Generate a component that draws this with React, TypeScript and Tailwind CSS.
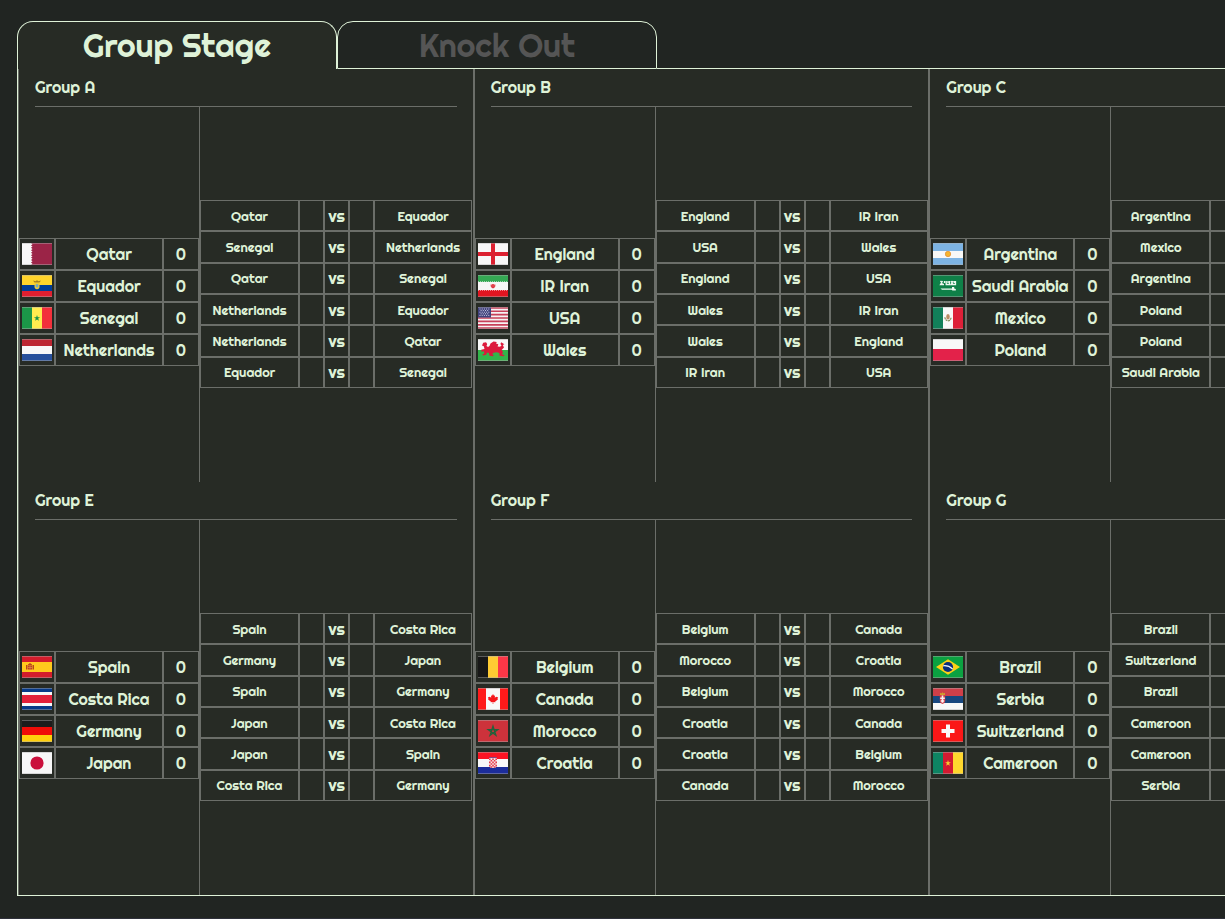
import React, { useState } from "react";

const STAR = "0,-1 0.2245,-0.309 0.951,-0.309 0.3633,0.118 0.5878,0.809 0,0.382 -0.5878,0.809 -0.3633,0.118 -0.951,-0.309 -0.2245,-0.309";

function Star({ x, y, r, ...rest }: { x: number; y: number; r: number } & React.SVGProps<SVGPolygonElement>) {
  return <polygon points={STAR} transform={`translate(${x} ${y}) scale(${r})`} {...rest} />;
}

function Rows({ colors, stops }: { colors: string[]; stops: number[] }) {
  return (
    <>
      {colors.map((c, i) => (
        <rect key={i} x="0" width="30" y={stops[i]} height={stops[i + 1] - stops[i]} fill={c} />
      ))}
    </>
  );
}

function Cols({ colors, stops }: { colors: string[]; stops: number[] }) {
  return (
    <>
      {colors.map((c, i) => (
        <rect key={i} y="0" height="22" x={stops[i]} width={stops[i + 1] - stops[i]} fill={c} />
      ))}
    </>
  );
}

const FLAGS: Record<string, React.ReactNode> = {
  Qatar: (
    <>
      <rect width="30" height="22" fill="#9b2447" />
      <path d="M0 0H9L10.5 1.2 9 2.4 10.5 3.6 9 4.8 10.5 6 9 7.3 10.5 8.5 9 9.8 10.5 11 9 12.2 10.5 13.4 9 14.6 10.5 15.8 9 17 10.5 18.3 9 19.6 10.5 20.8 9 22H0Z" fill="#f8f8f8" />
    </>
  ),
  Equador: (
    <>
      <Rows colors={["#ffd42b", "#003d96", "#e01f30"]} stops={[0, 10, 16, 22]} />
      <path d="M11 5.5L13.5 6.2 15 5.3 16.5 6.2 19 5.5 17.5 7.4H12.5Z" fill="#a58122" />
      <path d="M12.5 8.2H17.5V11.5A2.5 2.8 0 0 1 12.5 11.5Z" fill="#e8c93a" />
      <ellipse cx="15" cy="10.8" rx="1.4" ry="1.7" fill="#6ea8c8" />
    </>
  ),
  Senegal: (
    <>
      <Cols colors={["#1b9648", "#ffec4f", "#f3303b"]} stops={[0, 10, 20, 30]} />
      <Star x={15} y={11.2} r={3.3} fill="#15924a" />
    </>
  ),
  Netherlands: <Rows colors={["#bd2733", "#f8f8f8", "#27509c"]} stops={[0, 7, 15, 22]} />,
  England: (
    <>
      <rect width="30" height="22" fill="#f7f7f7" />
      <path d="M13 0H17V9H30V13H17V22H13V13H0V9H13Z" fill="#dc2030" />
    </>
  ),
  "IR Iran": (
    <>
      <Rows colors={["#34a853", "#f6f6f6", "#e01520"]} stops={[0, 7, 15, 22]} />
      <path d="M0 6.6H30M0 15.4H30" stroke="#f6f6f6" strokeWidth="0.6" strokeDasharray="1 1" />
      <ellipse cx="15" cy="11.1" rx="2" ry="2" fill="#e5525a" />
      <path d="M13 9.6Q12.5 12.2 15 13 17.5 12.2 17 9.6M15 9V13.2" fill="none" stroke="#dc2a36" strokeWidth="0.8" />
    </>
  ),
  USA: (
    <>
      <rect width="30" height="22" fill="#f7f2f3" />
      <path d="M0 .85H30M0 4.25H30M0 7.6H30M0 11H30M0 14.4H30M0 17.8H30M0 21.2H30" stroke="#c8405a" strokeWidth="1.7" />
      <rect width="13" height="10.5" fill="#40417c" />
      <path d="M1.5 2H12M1.5 5.2H12M1.5 8.4H12" stroke="#e0e0f0" strokeWidth="0.9" strokeDasharray="1 1.2" />
      <path d="M2.6 3.6H11M2.6 6.8H11" stroke="#e0e0f0" strokeWidth="0.9" strokeDasharray="1 1.2" />
    </>
  ),
  Wales: (
    <>
      <Rows colors={["#f8f8f8", "#33b54a"]} stops={[0, 11, 22]} />
      <path d="M4 6.5L5.2 3.8 8 3.2 9.2 5 8.5 7 10 8 11.5 7 12.5 4.6 15.5 2.6 18.8 3 18 4.6 20.3 5.2 19.6 7.4 22 7.8 23.6 6.4 22.4 5 23.2 3.2 26.4 5.2 24.8 6 26 8.5 23.6 11 25 13 24 15.2 26.5 16.3 25.5 17.2 21.6 16.8 21.4 14 18.6 13.2 15.5 13.8 14.2 15 15.6 16.2 15 17.2 11.5 16.8 11 14 9 13.6 8.2 15.8 5 16.5 4.4 15.5 6.3 14.4 6 12.2 3.6 12.8 3.2 10.8 6.5 10 5.8 7.2Z" fill="#dc1a3c" />
    </>
  ),
  Argentina: (
    <>
      <Rows colors={["#7db4e4", "#f8f8f8", "#7db4e4"]} stops={[0, 8, 15, 22]} />
      <circle cx="15" cy="11" r="2.7" fill="#f6b52e" stroke="#e08c35" strokeWidth="0.7" />
    </>
  ),
  "Saudi Arabia": (
    <>
      <rect width="30" height="22" fill="#0f8048" />
      <path d="M7.5 6L9.5 8.5M9.5 6L7.5 9.5H11M11.5 6V8M13.2 6V9.5H16.5V6M15 6V8M18 6L20 9.5M20 6L18 9.5H22.5V6M21.2 6V8" fill="none" stroke="#eef8f0" strokeWidth="1.3" />
      <path d="M7.5 13.4L19 13.4V12H21.2V13.6L22.8 14V15.6H19.5L18.5 14.8H9Z" fill="#f2faf4" />
    </>
  ),
  Mexico: (
    <>
      <Cols colors={["#12805a", "#f8f8f8", "#dd2038"]} stops={[0, 10, 20, 30]} />
      <ellipse cx="15" cy="9.8" rx="1.8" ry="2.8" fill="#b98b63" />
      <path d="M11.9 10.2Q12.2 13.5 15 13.8 17.8 13.5 18.1 10.2" fill="none" stroke="#7c8a58" strokeWidth="1.2" strokeDasharray="2 0.6" />
    </>
  ),
  Poland: <Rows colors={["#f8f8f8", "#e3224a"]} stops={[0, 10, 22]} />,
  Spain: (
    <>
      <Rows colors={["#d31c2c", "#ffc91d", "#d31c2c"]} stops={[0, 6, 16, 22]} />
      <path d="M4 9H5.5V13.5H4ZM10.5 9H12V13.5H10.5ZM6 8.5L8 7 10 8.5V9.5H6Z" fill="#b8451c" />
      <path d="M6 9.8H10V13.5H6Z" fill="#c03a28" />
      <path d="M8 10V13.5M6 11.5H10" stroke="#e3a04a" strokeWidth="0.6" />
    </>
  ),
  "Costa Rica": <Rows colors={["#073a88", "#f8f8f8", "#e3203a", "#f8f8f8", "#073a88"]} stops={[0, 4, 7, 15, 18, 22]} />,
  Germany: <Rows colors={["#1c1c1c", "#f00c08", "#ffd00c"]} stops={[0, 7, 15, 22]} />,
  Japan: (
    <>
      <rect width="30" height="22" fill="#f7f7f7" />
      <circle cx="15" cy="11" r="6.6" fill="#ca0f3b" />
    </>
  ),
  Belgium: <Cols colors={["#181818", "#ffcb33", "#fb3747"]} stops={[0, 10, 20, 30]} />,
  Canada: (
    <>
      <Cols colors={["#ff1a1a", "#f8f8f8", "#ff1a1a"]} stops={[0, 8, 22, 30]} />
      <path d="M15 6L16 7.8 17 7.4 16.8 9.8 18.2 8.8 20.2 9.5 19.4 11 20 11.6 17.2 13.6 17.4 14.3 15.3 14V16H14.7V14L12.6 14.3 12.8 13.6 10 11.6 10.6 11 9.8 9.5 11.8 8.8 13.2 9.8 13 7.4 14 7.8Z" fill="#f5161b" />
    </>
  ),
  Morocco: (
    <>
      <rect width="30" height="22" fill="#cd323b" />
      <g transform="translate(15 11.2)">
        <path d="M0-5L2.94 4.05-4.76-1.55H4.76L-2.94 4.05Z" fill="none" stroke="#23603a" strokeWidth="1.3" />
      </g>
    </>
  ),
  Croatia: (
    <>
      <Rows colors={["#fb1423", "#f8f8f8", "#1c2d9b"]} stops={[0, 7, 15, 22]} />
      <path d="M11 6H19V13.5Q18.5 16 15 16 11.5 16 11 13.5Z" fill="#f8e4e6" />
      <path d="M11 7.2H19M11 10.4H19M11 13.6H19" stroke="#e63a4a" strokeWidth="1.6" strokeDasharray="1.6 1.6" />
      <path d="M12.6 8.8H19M12.6 12H19M12.6 15H17.6" stroke="#e63a4a" strokeWidth="1.6" strokeDasharray="1.6 1.6" />
      <path d="M11.5 5.6H18.5" stroke="#4a62b8" strokeWidth="1" strokeDasharray="1.4 0.5" />
    </>
  ),
  Brazil: (
    <>
      <rect width="30" height="22" fill="#0ba141" />
      <path d="M15 3.2L27 11 15 18.8 3 11Z" fill="#fdd116" />
      <circle cx="15" cy="11" r="5.1" fill="#0b2f7c" />
      <path d="M10.2 9.8Q15.5 9.2 19.6 13" fill="none" stroke="#f2f6fa" strokeWidth="1.2" />
    </>
  ),
  Serbia: (
    <>
      <Rows colors={["#cf3f49", "#18477f", "#f8f8f8"]} stops={[0, 8, 15, 22]} />
      <path d="M7 7V4.8L8.3 5.6 9.5 4.2 10.7 5.6 12 4.8V7Z" fill="#d0a02c" />
      <path d="M6.8 7.5H12.2V13Q12 15.5 9.5 16 7 15.5 6.8 13Z" fill="#d8404a" />
      <path d="M9.5 7.6V14.8M7.2 10.2H11.8M7.8 13H11.2" stroke="#f8f0f0" strokeWidth="1.6" />
    </>
  ),
  Switzerland: (
    <>
      <rect width="30" height="22" fill="#fb1717" />
      <path d="M13 4.5H17V9H21.5V13H17V17.5H13V13H8.5V9H13Z" fill="#fafafa" />
    </>
  ),
  Cameroon: (
    <>
      <Cols colors={["#0e8463", "#d41a31", "#ffd72e"]} stops={[0, 10, 20, 30]} />
      <Star x={15} y={11.2} r={3.1} fill="#f8cf2c" />
    </>
  ),
};

function Flag({ team }: { team: string }) {
  return (
    <svg viewBox="0 0 30 22" className="mx-auto block h-[22px] w-[30px]" role="img" aria-label={team}>
      {FLAGS[team]}
      <path d="M0 .5H30M0 21.5H30" stroke="#b0b0b0" strokeOpacity="0.45" />
    </svg>
  );
}

const GROUPS = [
  { name: "Group A", teams: ["Qatar", "Equador", "Senegal", "Netherlands"] },
  { name: "Group B", teams: ["England", "IR Iran", "USA", "Wales"] },
  { name: "Group C", teams: ["Argentina", "Saudi Arabia", "Mexico", "Poland"] },
  { name: "Group E", teams: ["Spain", "Costa Rica", "Germany", "Japan"] },
  { name: "Group F", teams: ["Belgium", "Canada", "Morocco", "Croatia"] },
  { name: "Group G", teams: ["Brazil", "Serbia", "Switzerland", "Cameroon"] },
];

// Index pairs into a group's team list, in playing order.
const FIXTURES = [
  [0, 1],
  [2, 3],
  [0, 2],
  [3, 1],
  [3, 0],
  [1, 2],
];

const CELL = "border border-[#6b6e69] p-0 text-center align-middle";

function Standings({ teams }: { teams: string[] }) {
  return (
    <table className="w-full table-fixed border-separate border-spacing-0 text-base leading-5">
      <colgroup>
        <col className="w-9" />
        <col />
        <col className="w-9" />
      </colgroup>
      <tbody>
        {teams.map((team) => (
          <tr key={team} className="h-8">
            <td className={CELL}>
              <Flag team={team} />
            </td>
            <td className={`${CELL} whitespace-nowrap`}>{team}</td>
            <td className={CELL}>0</td>
          </tr>
        ))}
      </tbody>
    </table>
  );
}

function Matches({ teams }: { teams: string[] }) {
  return (
    <table className="h-[188px] w-[272px] table-fixed border-separate border-spacing-0 text-[13px] leading-5">
      <colgroup>
        <col className="w-[99px]" />
        <col className="w-[25px]" />
        <col className="w-[25px]" />
        <col className="w-[25px]" />
        <col />
      </colgroup>
      <tbody>
        {FIXTURES.map(([home, away], i) => (
          <tr key={i}>
            <td className={CELL}>{teams[home]}</td>
            <td className={CELL} />
            <td className={`${CELL} text-base leading-5`}>vs</td>
            <td className={CELL} />
            <td className={CELL}>{teams[away]}</td>
          </tr>
        ))}
      </tbody>
    </table>
  );
}

function Group({ name, teams }: { name: string; teams: string[] }) {
  return (
    <section className="flex h-[413px] flex-col border-x border-[#6b6e69]">
      <h2 className="mx-4 flex h-[38px] shrink-0 items-center border-b border-[#6b6e69] pb-0.5 text-base">{name}</h2>
      <div className="flex flex-1">
        <div className="flex w-[181px] shrink-0 items-center border-r border-[#6b6e69] pt-[15px]">
          <Standings teams={teams} />
        </div>
        <div className="flex flex-1 items-center pb-px">
          <Matches teams={teams} />
        </div>
      </div>
    </section>
  );
}

const TABS = ["Group Stage", "Knock Out"];

export default function App() {
  const [active, setActive] = useState(0);
  return (
    <main className="min-h-screen overflow-x-auto border-b border-[#2e303a] bg-[#212522] pt-[21px] pl-[17px] font-['Righteous','Lato',sans-serif] text-[#dff2d8] [scrollbar-width:none]">
      <div className="min-w-[1369px]">
        <div className="flex" role="tablist">
          {TABS.map((tab, i) => (
            <button
              key={tab}
              type="button"
              role="tab"
              aria-selected={active === i}
              onClick={() => setActive(i)}
              className={
                active === i
                  ? "h-12 w-80 rounded-t-2xl border border-b-0 border-[#dff2d8] bg-[#272b25] pb-0.5 text-[32px] leading-10"
                  : "h-12 w-80 rounded-t-2xl border border-[#dff2d8] pb-px text-[32px] leading-10 text-[#555555]"
              }
            >
              {tab}
            </button>
          ))}
          <div className="flex-1 border-b border-[#dff2d8]" />
        </div>
        <div className="grid grid-cols-3 border border-t-0 border-[#dff2d8] bg-[#272b25]">
          {GROUPS.map((group) => (
            <Group key={group.name} {...group} />
          ))}
        </div>
      </div>
    </main>
  );
}
